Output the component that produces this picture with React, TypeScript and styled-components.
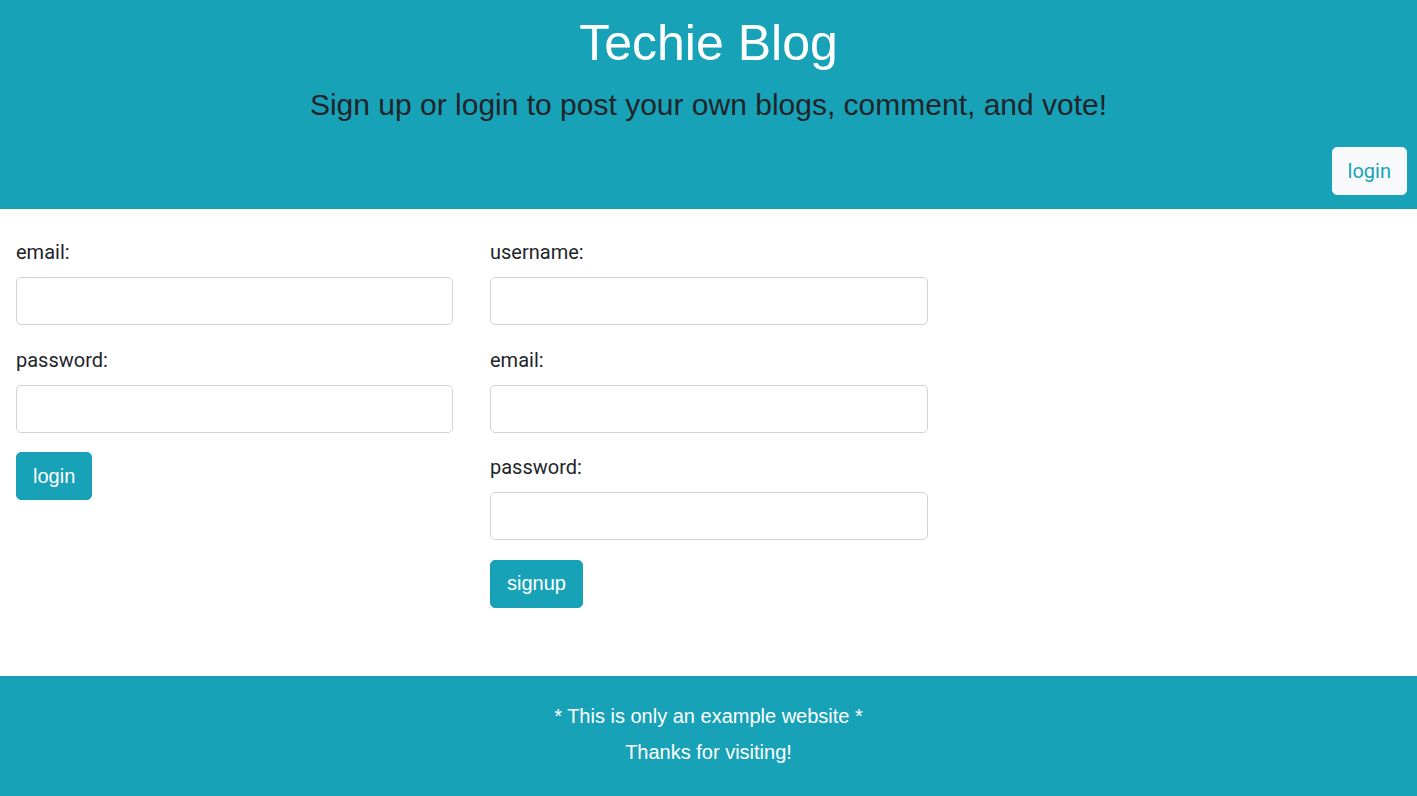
import React from "react";
import styled, { createGlobalStyle } from "styled-components";

const Global = createGlobalStyle`
  html, body { margin: 0; padding: 0; background: #ffffff; }
  body { font-family: Roboto, "Liberation Sans", Arial, sans-serif; color: #212529; }
  * { box-sizing: border-box; }
`;

const Page = styled.div`
  display: flex;
  flex-direction: column;
  min-height: 796px;
`;

const Header = styled.header`
  background: #17a2b8;
  display: flex;
  flex-direction: column;
  align-items: center;
  padding: 14px 10px 14px 10px;
  height: 209px;
`;

const Title = styled.h1`
  margin: 0;
  font-family: "Liberation Sans", Arial, sans-serif;
  font-weight: 400;
  font-size: 50px;
  line-height: 58px;
  color: #ffffff;
`;

const Subtitle = styled.h2`
  margin: 16px 0 0 0;
  font-family: "Liberation Sans", Arial, sans-serif;
  font-weight: 400;
  font-size: 30px;
  line-height: 34px;
  color: #212529;
`;

const NavRow = styled.div`
  align-self: stretch;
  display: flex;
  justify-content: flex-end;
  margin-top: 25px;
`;

const NavButton = styled.button`
  height: 48px;
  padding: 0 15px;
  border: 1px solid #f8f9fa;
  border-radius: 5px;
  background: #f8f9fa;
  color: #17a2b8;
  font-family: Roboto, "Liberation Sans", Arial, sans-serif;
  font-size: 20px;
  cursor: pointer;
`;

const Main = styled.main`
  flex: 1;
  display: flex;
  gap: 37px;
  padding: 28px 0 0 16px;
`;

const FormCol = styled.form<{ $w: number }>`
  width: ${(p) => p.$w}px;
  display: flex;
  flex-direction: column;
`;

const Field = styled.div`
  display: flex;
  flex-direction: column;
  margin-bottom: 19.5px;
`;

const Label = styled.label`
  font-size: 20px;
  line-height: 30px;
  margin-bottom: 10px;
  color: #212529;
`;

const Input = styled.input`
  height: 48px;
  width: 100%;
  border: 1px solid #ced4da;
  border-radius: 5px;
  padding: 8px 16px;
  font-size: 20px;
  background: #fff;
  outline: none;
`;

const SubmitButton = styled.button`
  align-self: flex-start;
  height: 48px;
  padding: 0 16px;
  border: 1px solid #17a2b8;
  border-radius: 5px;
  background: #17a2b8;
  color: #ffffff;
  font-family: "Liberation Sans", Arial, sans-serif;
  font-size: 20px;
  cursor: pointer;
`;

const Footer = styled.footer`
  background: #17a2b8;
  height: 120px;
  display: flex;
  flex-direction: column;
  align-items: center;
  padding-top: 30px;
  gap: 16px;
  color: #ffffff;
  font-family: "Liberation Sans", Arial, sans-serif;
  font-size: 20px;
  line-height: 20px;
`;

const FooterLine = styled.div``;

export default function App() {
  return (
    <Page>
      <Global />
      <Header>
        <Title>Techie Blog</Title>
        <Subtitle>Sign up or login to post your own blogs, comment, and vote!</Subtitle>
        <NavRow>
          <NavButton type="button">login</NavButton>
        </NavRow>
      </Header>
      <Main>
        <FormCol $w={437} onSubmit={(e) => e.preventDefault()}>
          <Field>
            <Label>email:</Label>
            <Input type="email" />
          </Field>
          <Field>
            <Label>password:</Label>
            <Input type="password" />
          </Field>
          <SubmitButton type="submit">login</SubmitButton>
        </FormCol>
        <FormCol $w={438} onSubmit={(e) => e.preventDefault()}>
          <Field>
            <Label>username:</Label>
            <Input type="text" />
          </Field>
          <Field>
            <Label>email:</Label>
            <Input type="email" />
          </Field>
          <Field>
            <Label>password:</Label>
            <Input type="password" />
          </Field>
          <SubmitButton type="submit">signup</SubmitButton>
        </FormCol>
      </Main>
      <Footer>
        <FooterLine>* This is only an example website *</FooterLine>
        <FooterLine>Thanks for visiting!</FooterLine>
      </Footer>
    </Page>
  );
}
